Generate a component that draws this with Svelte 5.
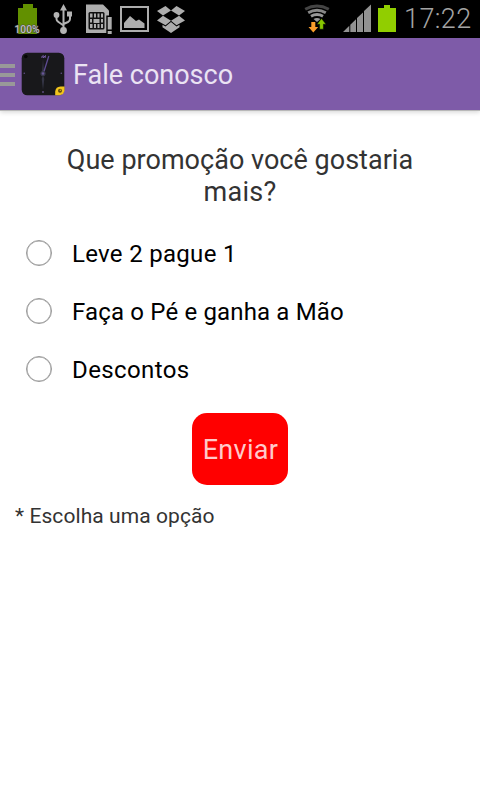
<script>
  const options = [
    { label: 'Leve 2 pague 1', spacing: 0.3 },
    { label: 'Faça o Pé e ganha a Mão', spacing: 0.16 },
    { label: 'Descontos', spacing: 0.4 },
  ];
  let selected = $state(null);
</script>

<div class="screen">
  <div class="status">
    <svg class="battery-level" width="28" height="38" viewBox="0 0 28 38" aria-hidden="true">
      <path fill="#629000" d="M9 4h10v4h4v26H4V8h5z" />
      <text x="13" y="32.500" text-anchor="middle" textLength="25" lengthAdjust="spacingAndGlyphs">100%</text>
    </svg>
    <svg class="usb" width="20" height="38" viewBox="0 0 20 38" aria-hidden="true">
      <g fill="none" stroke="#b4b4b4" stroke-width="2">
        <path d="M10.500 8v23M3.500 15v4q0 2 2 3l5 3.500M17 15v4q0 2-2 3l-4.500 2" />
      </g>
      <path fill="#b4b4b4" d="M10.500 4l3.500 6.500H7zM14 11.500h5v5h-5z" />
      <circle cx="3.500" cy="15" r="2.900" fill="#b4b4b4" />
      <circle cx="10.500" cy="30.500" r="3.400" fill="#b4b4b4" />
    </svg>
    <svg class="sim" width="27" height="38" viewBox="0 0 27 38" aria-hidden="true">
      <path fill="#adadad" d="M0 4.500h17l6 6V33H0z" />
      <rect x="2.500" y="12" width="16" height="17.500" rx="1.500" fill="#111" />
      <path fill="#adadad" d="M4 13.500h2.500v4H4zM8 13.500h2v4H8zM11.500 13.500h2v4h-2zM15 13.500h2v4h-2zM4 24h2.500v4H4zM8 24h2v4H8zM11.500 24h2v4h-2zM15 24h2v4h-2zM4 19h2v3.500H4zM15 19h2v3.500h-2zM7.500 19h6v4h-6z" />
      <path fill="#000" d="M20.300 15.500H27V35h-6.700z" />
      <path fill="#adadad" d="M21.700 17h4v12.500h-4zM21.700 31h4v3h-4z" />
    </svg>
    <svg class="picture" width="29" height="38" viewBox="0 0 29 38" aria-hidden="true">
      <rect x="1" y="7" width="27" height="24" fill="none" stroke="#adadad" stroke-width="2" />
      <path fill="#adadad" d="M4 28v-5l6-7 6 5 3-1.500 5.500 4V28z" />
    </svg>
    <svg class="dropbox" width="28" height="38" viewBox="0 0 28 38" aria-hidden="true">
      <path fill="#adadad" d="M8.500 6l5.500 4.500-8 5L0 11zM19.500 6l8.500 5-6 4.500-8-5zM6 15.700l8 5-5.500 4.500L0 20.500zM22 15.700l6 4.800-8.500 4.700-5.500-4.500zM14 22l5.500 4.500 3-1.700v2.500L14 33l-8.500-5.700v-2.500l3 1.700z" />
    </svg>
    <svg class="wifi" width="28" height="38" viewBox="0 0 28 38" aria-hidden="true">
      <g fill="none" stroke-width="3">
        <path stroke="#444" d="M1.200 9.200q11.800-6.500 23.600 0" />
        <path stroke="#888" d="M4.200 12.800q8.800-5 17.600 0" />
        <path stroke="#999" d="M7 16.300q6-3.400 12 0" />
      </g>
      <path fill="#999" d="M9.500 19q3.500-2 7 0L13 22z" />
      <path fill="#fa9d2b" d="M7.300 22h4v5h2.900L9.300 32.500 4.500 27h2.800z" />
      <path fill="#87c600" stroke="#000" stroke-width=".5" d="M17.500 18.500l4.600 5.700h-2.700V29.200h-3.800v-5h-2.700z" />
    </svg>
    <svg class="signal" width="29" height="38" viewBox="0 0 29 38" aria-hidden="true">
      <path fill="#929292" d="M0 32l6.300-6.200V32zM7.300 24.700l5.700-5.400V32H7.300zM14 18l6-5.500V32h-6zM21 11l7-6.500V32h-7z" />
    </svg>
    <svg class="battery" width="18" height="38" viewBox="0 0 18 38" aria-hidden="true">
      <path fill="#91ce00" d="M6 5h6v3h6v24H0V8h6z" />
    </svg>
    <span class="clock">17:22</span>
  </div>

  <header>
    <div class="menu"><i></i><i></i><i></i></div>
    <svg class="logo" width="44" height="44" viewBox="0 0 44 44" aria-hidden="true">
      <rect x=".7" y=".7" width="42.600" height="42.600" rx="5.500" fill="#18181b" />
      <path fill="#343545" d="M22 7l1 13h-2zM22 23l1.300 4L22 38l-1.300-11z" />
      <path d="M27.800 4L23 19.500" fill="none" stroke="#5f4c94" stroke-width="1.300" />
      <path d="M20 5.500l2.300-2-.3 2.500L24.500 3.500l-.5 2.500" fill="none" stroke="#755ba6" stroke-width="1" />
      <circle cx="22" cy="21.500" r="2.600" fill="#393a4c" />
      <circle cx="22" cy="21.500" r="1.200" fill="#6a5599" />
      <g fill="#62508a">
        <circle cx="3.300" cy="21.300" r=".8" /><circle cx="40.300" cy="21.300" r=".8" /><circle cx="22" cy="40" r=".9" />
      </g>
      <circle cx="4.800" cy="4.500" r="1.800" fill="#050505" />
      <path fill="#f2c41c" d="M34.200 43.300v-3.800q.5-4.800 5.300-5h4v3.800q-.5 4.800-5.200 5z" />
      <circle cx="39" cy="38.700" r="2" fill="#5d490d" />
      <circle cx="39.300" cy="38.200" r=".7" fill="#e5b91c" />
    </svg>
    <h1>Fale conosco</h1>
  </header>

  <main>
    <h2>Que promoção você gostaria<br /><span>mais?</span></h2>
    <div class="options">
      {#each options as option, i}
        <label>
          <input type="radio" name="promo" value={i} bind:group={selected} />
          <span class="opt" style="letter-spacing: {option.spacing}px">{option.label}</span>
        </label>
      {/each}
    </div>
    <button type="button">Enviar</button>
    <p>* Escolha uma opção</p>
  </main>
</div>

<style>
  :global(body) { background: #fff; overflow: hidden; }
  .screen {
    width: 480px;
    height: 800px;
    overflow: hidden;
    background: #fff;
    font-family: Roboto, "Noto Sans", sans-serif;
    color: #333;
  }
  .status { display: flex; height: 38px; background: #000; }
  svg { display: block; flex: none; }
  .battery-level { margin-left: 14px; }
  .battery-level text {
    font: 500 10.5px Roboto, sans-serif;
    fill: #c0c0c0;
    stroke: #444;
    stroke-width: 1px;
    paint-order: stroke;
  }
  .usb { margin-left: 11px; }
  .sim { margin-left: 13px; }
  .picture { margin-left: 7px; }
  .dropbox { margin-left: 8px; }
  .wifi { margin-left: 119px; }
  .signal { margin-left: 11px; }
  .battery { margin-left: 6px; }
  .clock {
    margin-left: 8px;
    font-size: 27px;
    font-weight: 300;
    line-height: 38px;
    letter-spacing: 0.4px;
    color: #a4a4a4;
    white-space: nowrap;
  }
  header {
    display: flex;
    align-items: center;
    height: 72px;
    background: #7e5ba8;
    box-shadow: 0 1px 0 #b8b8b8, 0 2px 5px rgba(0, 0, 0, 0.18);
  }
  .menu { display: flex; flex-direction: column; gap: 5px; width: 15px; margin-top: 2px; }
  .menu i { height: 4px; background: #999; }
  .logo { margin-left: 6px; }
  h1, h2, p { margin: 0; font-weight: 400; }
  h1 { margin-left: 8px; padding-top: 2px; font-size: 27px; line-height: 32px; letter-spacing: 0; color: #ebe3f3; white-space: nowrap; }
  main { display: flex; flex-direction: column; align-items: center; padding-top: 34px; }
  h2 { font-size: 27px; line-height: 32px; letter-spacing: 0.02px; text-align: center; white-space: nowrap; }
  h2 span { letter-spacing: 0.3px; }
  .options { width: 100%; padding-top: 17px; }
  label { display: flex; align-items: center; height: 58px; padding-left: 26px; color: #000; }
  input {
    appearance: none;
    box-sizing: border-box;
    width: 26px;
    height: 26px;
    margin: 0 20px 2px 0;
    border: 1px solid #999;
    border-radius: 50%;
    background: #fff;
    box-shadow: inset 0 0 0 0.5px #999;
  }
  input:checked { background: radial-gradient(#33b5e5 45%, #fff 48%); }
  .opt { font-size: 24px; line-height: 28px; }
  button {
    width: 96px;
    height: 72px;
    margin-top: 14px;
    padding: 2px 0 0 1px;
    border: 0;
    border-radius: 15px;
    background: #f00;
    color: #ffcaca;
    font: 27px/32px Roboto, sans-serif;
    letter-spacing: 0.3px;
  }
  p { align-self: flex-start; margin: 19px 0 0 15px; font-size: 21px; line-height: 25px; letter-spacing: 0.08px; }
</style>
